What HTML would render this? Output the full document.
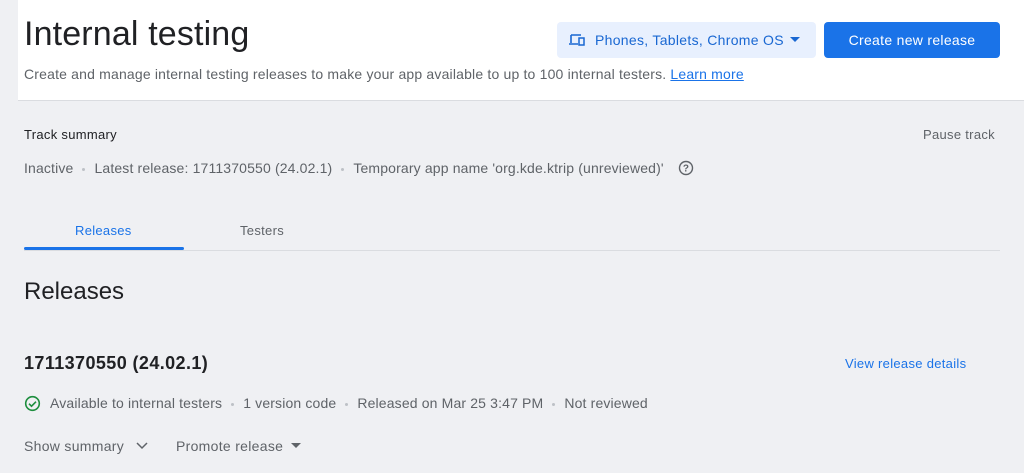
<!DOCTYPE html>
<html><head><style>
*{margin:0;padding:0;box-sizing:border-box}
body{width:1024px;height:473px;background:#eff0f3;font-family:"Liberation Sans",sans-serif;color:#202124;position:relative;overflow:hidden}
.hdr{position:absolute;left:18px;top:0;width:1006px;height:101px;background:#fff;border-bottom:1px solid #dadce0}
.abs{position:absolute;white-space:nowrap}
.g{color:#5f6368}
.dot{display:inline-block;width:3px;height:3px;border-radius:50%;background:#bdc1c6;vertical-align:middle;margin:0 9px}
.m{font-weight:normal;letter-spacing:0.3px}
</style></head><body>
<div class="hdr"></div>
<div class="abs" style="left:24px;top:15px;font-size:34px;color:#202124;letter-spacing:0.15px">Internal testing</div>
<div class="abs g" style="left:24px;top:66px;font-size:14px;letter-spacing:0.18px">Create and manage internal testing releases to make your app available to up to 100 internal testers. <span style="color:#1a73e8;text-decoration:underline">Learn more</span></div>
<div class="abs m" style="left:557px;top:22px;width:259px;height:36px;background:#e8f0fe;border-radius:4px;color:#1967d2;font-size:14px;line-height:36px;padding-left:38px">Phones, Tablets, Chrome OS
<svg style="position:absolute;left:12px;top:11px" width="16" height="14" viewBox="0 0 16 14"><path d="M2 2h10M2 2v8M0 11h9" stroke="#1967d2" stroke-width="1.6" fill="none"/><rect x="10" y="5" width="5" height="7" stroke="#1967d2" stroke-width="1.5" fill="none"/></svg>
<svg style="position:absolute;left:233px;top:15px" width="10" height="6"><path d="M0 0h10L5 5z" fill="#1967d2"/></svg></div>
<div class="abs m" style="left:824px;top:22px;width:176px;height:36px;background:#1a73e8;border-radius:4px;color:#fff;font-size:14px;line-height:36px;text-align:center">Create new release</div>
<div class="abs m" style="left:24px;top:127px;font-size:13px;color:#202124">Track summary</div>
<div class="abs g m" style="left:923px;top:127px;font-size:13px">Pause track</div>
<div class="abs g" style="left:24px;top:160px;font-size:14px;letter-spacing:0.15px">Inactive<span class="dot"></span>Latest release: 1711370550 (24.02.1)<span class="dot"></span>Temporary app name 'org.kde.ktrip (unreviewed)'
<svg style="vertical-align:-3px;margin-left:10px" width="16" height="16"><circle cx="8" cy="8" r="6.5" stroke="#5f6368" stroke-width="1.4" fill="none"/><text x="8" y="11.5" font-size="10" text-anchor="middle" fill="#5f6368" font-family="Liberation Sans" font-weight="bold">?</text></svg></div>
<div class="abs" style="left:24px;top:250px;width:976px;height:1px;background:#dadce0"></div>
<div class="abs" style="left:24px;top:247px;width:160px;height:3px;background:#1a73e8;border-radius:2px"></div>
<div class="abs m" style="left:75px;top:223px;font-size:13px;color:#1a73e8">Releases</div>
<div class="abs g m" style="left:240px;top:223px;font-size:13px">Testers</div>
<div class="abs" style="left:24px;top:278px;font-size:24px">Releases</div>
<div class="abs" style="left:24px;top:353px;font-size:18px;font-weight:bold;letter-spacing:0.4px;color:#202124">1711370550 (24.02.1)</div>
<div class="abs m" style="left:845px;top:356px;font-size:13px;color:#1a73e8">View release details</div>
<div class="abs g" style="left:24px;top:395px;font-size:14px;letter-spacing:0.15px"><svg style="vertical-align:-4px;margin-right:9px" width="17" height="17"><circle cx="8.5" cy="8.5" r="6.8" stroke="#1e8e3e" stroke-width="1.6" fill="none"/><path d="M5 8.7l2.5 2.5 4.5-4.5" stroke="#1e8e3e" stroke-width="1.6" fill="none"/></svg>Available to internal testers<span class="dot"></span>1 version code<span class="dot"></span>Released on Mar 25 3:47 PM<span class="dot"></span>Not reviewed</div>
<div class="abs g m" style="left:24px;top:438px;font-size:14px">Show summary <svg style="margin-left:8px;vertical-align:1px" width="12" height="8"><path d="M1 1l5 5 5-5" stroke="#5f6368" stroke-width="1.5" fill="none"/></svg></div>
<div class="abs g m" style="left:176px;top:438px;font-size:14px">Promote release <svg style="margin-left:4px;vertical-align:2px" width="10" height="6"><path d="M0 0h10L5 5z" fill="#5f6368"/></svg></div>
</body></html>
